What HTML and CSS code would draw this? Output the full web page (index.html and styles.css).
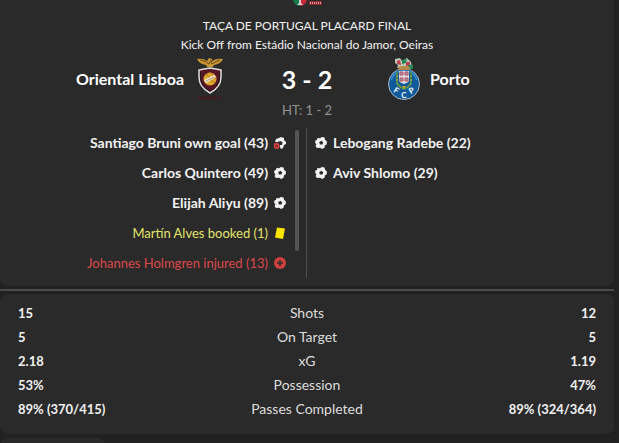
FILE: index.html
```html
<!DOCTYPE html>
<html lang="en">
<head>
<meta charset="utf-8">
<title>Oriental Lisboa 3 - 2 Porto</title>
<link rel="stylesheet" href="styles.css">
</head>
<body>
<svg class="defs" aria-hidden="true">
  <symbol id="ball" viewBox="0 0 12 12">
    <path fill="currentColor" fill-rule="evenodd" d="M2.4 1.1 5 1.3 6.8 0 9.6.5 10 2.8 12 4.6 11.6 7.4 10 8.2 9.5 10.8 7 12 5.2 10.8 2 11.1.6 9.2 1.4 7.2 0 5.4.6 3.2 2 3ZM6.2 3.8 4.2 5.2 4.9 7.5H7.5L8.2 5.2Z"/>
  </symbol>
</svg>
<main class="page">
  <section class="panel match">
    <svg class="cup" viewBox="0 0 30 8" aria-hidden="true">
      <path d="M1 0H8V6Q3 6 1 0" fill="#16794a"/>
      <path d="M8 0H15Q13 6 8 6" fill="#c4283a"/>
      <path d="M7 0H9V3L11 5H5L7 3Z" fill="#cfcfcf"/>
      <path d="M17 1H30V5H17Z" fill="#8d2731"/>
      <path d="M18 3H29" stroke="#d99a9f" stroke-width="2" stroke-dasharray="1 1"/>
    </svg>
    <p class="line">TAÇA DE PORTUGAL PLACARD FINAL</p>
    <p class="line">Kick Off from Estádio Nacional do Jamor, Oeiras</p>
    <div class="teams">
      <div class="team home">
        <h2>Oriental Lisboa</h2>
        <svg class="crest" viewBox="0 0 44 44" aria-hidden="true">
          <path d="M9 2Q15 1 19 4L21 1 24 2 24 4Q29 1 35 2Q33 7 26 8L25 10H19L18 8Q11 7 9 2Z" fill="#c79535"/>
          <path d="M12 3Q18 4 21 7L23 3 24 7Q28 4 32 3" fill="none" stroke="#705019"/>
          <path d="M11 13Q16 12 22 11Q28 12 33 13V20Q33 30 22 36Q11 30 11 20Z" fill="#571626" stroke="#dedede" stroke-width="1.5"/>
          <path d="M12.500 15V22Q14 30 22 34Q30 30 31.500 22V15" fill="none" stroke="#24151a"/>
          <circle cx="22" cy="22" r="6.500" fill="#e1a72d"/>
          <path d="M18 17 27 27M22 15 28 22" stroke="#a8741c"/>
          <path d="M16 23 26 18 28 20 18 26Z" fill="#eee5cf"/>
          <path d="m18 24 8-4" stroke="#a79a80"/>
          <path d="M11 41H33" stroke="#481821" stroke-width="3" stroke-dasharray="2 1"/>
        </svg>
      </div>
      <strong class="score">3 - 2</strong>
      <div class="team away">
        <svg class="crest" viewBox="0 0 44 44" aria-hidden="true">
          <circle cx="22" cy="27" r="15.500" fill="#0f599c" stroke="#a6b6c0"/>
          <path d="M9 23Q12 14 22 14Q32 14 35 23" fill="none" stroke="#2e8bd0" stroke-width="2"/>
          <path d="M13 2 18 1 20 4 25 1 29 5 30 11H15L16 8 13 6Z" fill="#b7c5b5"/>
          <path d="M15 4 18 3 19 8 15 7ZM24 5H28V9H24Z" fill="#bd414b"/>
          <path d="M20 3 25 2 24 6 20 7ZM26 8H31V12H26Z" fill="#27885a"/>
          <path d="M16 10Q22 8 28 10L27 13H17Z" fill="#b98a44"/>
          <path d="M15 15V26Q17 30 22 32Q27 30 29 26V15" fill="none" stroke="#3c8b57" stroke-width="2"/>
          <path d="M15 18V26Q17 31 22 31Q27 31 29 26V18" fill="none" stroke="#d99a35" stroke-dasharray="2 2"/>
          <path d="M17 14H27V24Q26 26 22 27Q18 26 17 24Z" fill="#d7dce4"/>
          <path d="M18 15H21V18H18ZM23 15H26V18H23ZM18 21H21V24H18ZM23 21H26V24H23Z" fill="#8da5bf" stroke="#cb4650"/>
          <path d="M20 29H24L22 32Z" fill="#d69b35"/>
          <g class="initials"><text x="13" y="36" transform="rotate(30 13 36)">F</text><text x="22" y="41">C</text><text x="31" y="36" transform="rotate(-30 31 36)">P</text></g>
        </svg>
        <h2>Porto</h2>
      </div>
    </div>
    <p class="half-time">HT: 1 - 2</p>
    <div class="events">
      <div class="side home-events">
        <ul>
          <li class="goal">Santiago Bruni own goal (43)
            <svg class="icon" viewBox="0 0 12 12" aria-hidden="true"><path fill="currentColor" d="M2 2 5 1 7 0 10 1 10 3 12 5 12 7 10 8 9 11 7 12 6 10 6 8H8L8.500 5 6 4 4 5 1 5Z"/><circle cx="2.500" cy="9" r="2.300" fill="#422" stroke="#ed4545" stroke-width="1.400"/><path d="M1.500 9H3.500" stroke="#ed4545"/></svg></li>
          <li class="goal">Carlos Quintero (49)<svg class="icon" aria-hidden="true"><use href="#ball"/></svg></li>
          <li class="goal">Elijah Aliyu (89)<svg class="icon" aria-hidden="true"><use href="#ball"/></svg></li>
          <li class="booked">Martín Alves booked (1)<svg class="icon" viewBox="0 0 12 12" aria-hidden="true"><path d="M3 .5 11 1.500 9 12 1 10.500Z" fill="#ffe600"/></svg></li>
          <li class="injured">Johannes Holmgren injured (13)<svg class="icon" viewBox="0 0 12 12" aria-hidden="true"><circle cx="6" cy="6" r="6" fill="#d04043"/><path d="M6 3V9M3 6H9" stroke="#2a2a2a" stroke-width="1.500"/></svg></li>
        </ul>
        <span class="thumb"></span>
      </div>
      <ul class="side away-events">
        <li class="goal"><svg class="icon" aria-hidden="true"><use href="#ball"/></svg>Lebogang Radebe (22)</li>
        <li class="goal"><svg class="icon" aria-hidden="true"><use href="#ball"/></svg>Aviv Shlomo (29)</li>
      </ul>
    </div>
  </section>
  <hr>
  <section class="panel stats">
    <table>
      <tr><td>15</td><th scope="row">Shots</th><td>12</td></tr>
      <tr><td>5</td><th scope="row">On Target</th><td>5</td></tr>
      <tr><td>2.18</td><th scope="row">xG</th><td>1.19</td></tr>
      <tr><td>53%</td><th scope="row">Possession</th><td>47%</td></tr>
      <tr><td>89% (370/415)</td><th scope="row">Passes Completed</th><td>89% (324/364)</td></tr>
    </table>
  </section>
  <div class="panel next"></div>
</main>
</body>
</html>
```
FILE: styles.css
```css
* { box-sizing: border-box; }
html { background: #212121; }
body {
  margin: 0;
  height: 100vh;
  overflow: hidden;
  color: #f2f2f2;
  font: 13px/20px Lato, "Liberation Sans", sans-serif;
}
p, h2, ul { margin: 0; padding: 0; }
ul { list-style: none; }
svg { display: block; flex: none; }
.defs { position: absolute; width: 0; height: 0; }
.page { padding-right: 5px; }
.panel { background: #2a2a2a; border-radius: 8px; }
.match {
  padding-bottom: 8px;
  border-radius: 0 0 8px 8px;
  text-align: center;
}
.cup { width: 30px; height: 8px; margin: 0 auto 8px; }
.line { font-size: 12px; line-height: 19px; }
.teams {
  display: grid;
  grid-template-columns: 1fr 150px 1fr;
  align-items: center;
  height: 48px;
  padding-top: 2px;
}
.team { display: flex; align-items: center; gap: 4px; }
.home { justify-content: flex-end; }
h2 { font-size: 16px; font-weight: 700; color: #fff; }
.crest { width: 44px; height: 44px; }
.initials {
  fill: #fff;
  font-size: 8px;
  font-weight: 700;
  text-anchor: middle;
}
.score { font-size: 25px; color: #fff; }
.half-time { padding-bottom: 10px; line-height: 16px; color: #929292; }
.events { display: grid; grid-template-columns: 1fr 1fr; height: 150px; }
.side { position: relative; }
.home-events { border-right: 1px solid #4c4c4c; padding-right: 20px; }
.away-events { padding-left: 8px; }
.side li { display: flex; align-items: center; gap: 6px; height: 30px; }
.home-events li { justify-content: flex-end; }
.icon { width: 12px; height: 12px; }
.goal { font-size: 14px; font-weight: 700; }
.booked { color: #e5e36a; }
.injured { color: #dc4848; }
.thumb {
  position: absolute;
  top: 2px;
  right: 7px;
  width: 4px;
  height: 121px;
  border-radius: 2px;
  background: #555;
}
hr { height: 2px; margin: 3px 0; border: 0; background: #4b4b4b; }
.stats { padding: 7px 18px 13px; }
table { width: 100%; table-layout: fixed; border-collapse: collapse; }
td, th { height: 24px; padding: 0; }
td { font-weight: 700; text-align: left; }
td:last-child { text-align: right; }
th { font-size: 14px; font-weight: 400; color: #ddd; }
.next { width: 105px; height: 24px; margin-top: 4px; background: #292929; }
```
